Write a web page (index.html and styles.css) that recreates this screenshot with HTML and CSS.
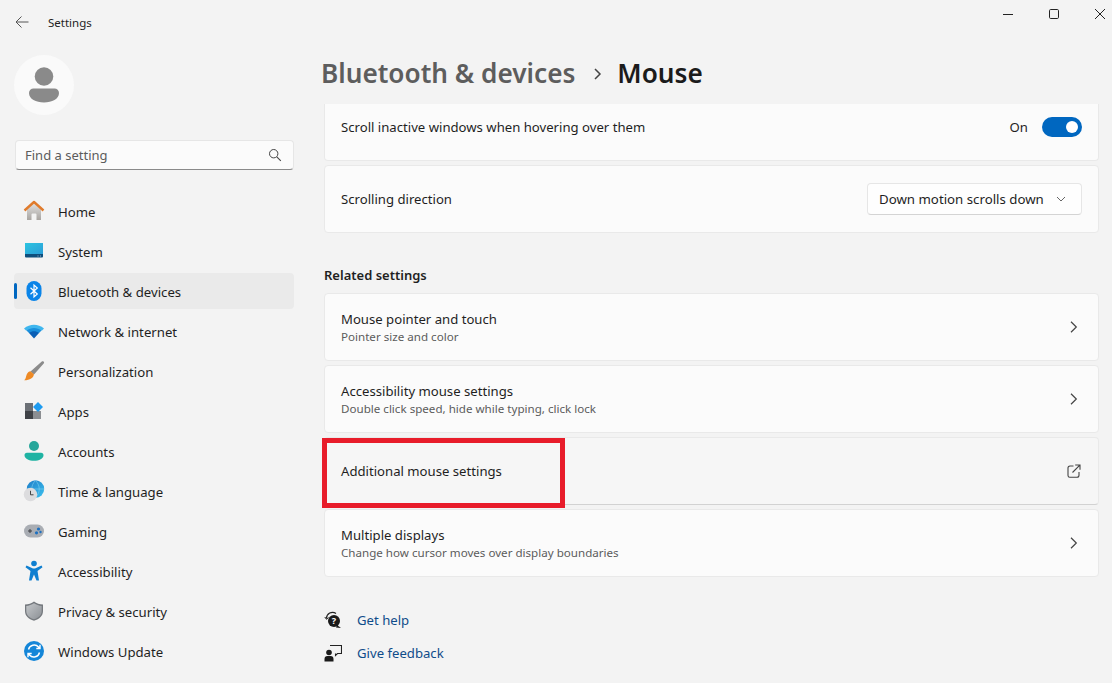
FILE: index.html
```html
<!DOCTYPE html>
<html lang="en">
<head>
<meta charset="utf-8">
<title>Settings</title>
<link rel="stylesheet" href="styles.css">
</head>
<body>
<div class="window">
  <header class="titlebar">
    <div class="title-left">
      <svg class="back" width="16" height="16" viewBox="0 0 16 16"><path d="M14.5 8H2M7.5 2.5 2 8l5.500 5.500" fill="none" stroke="#555" stroke-width="1"/></svg>
      <span class="app-name">Settings</span>
    </div>
    <div class="win-controls">
      <svg width="12" height="12" viewBox="0 0 12 12"><path d="M1 6.500h10" stroke="#222" stroke-width="1"/></svg>
      <svg width="12" height="12" viewBox="0 0 12 12"><rect x="1.500" y="1.500" width="9" height="9" rx="1.200" fill="none" stroke="#222" stroke-width="1"/></svg>
      <svg width="12" height="12" viewBox="0 0 12 12"><path d="M1 1l10 10M11 1 1 11" stroke="#222" stroke-width="1"/></svg>
    </div>
  </header>
  <div class="body">
    <aside class="sidebar">
      <div class="avatar">
        <svg width="30" height="36" viewBox="0 0 30 36"><circle cx="15" cy="9.500" r="9.300" fill="#8a8a8a"/><path d="M4.500 21.500h21a4.500 4.500 0 0 1 4.500 4.500c0 6-7 9.500-15 9.500S0 32 0 26a4.500 4.500 0 0 1 4.500-4.500z" fill="#8a8a8a"/></svg>
      </div>
      <div class="search">
        <span>Find a setting</span>
        <svg width="14" height="14" viewBox="0 0 14 14"><circle cx="5.700" cy="5.700" r="4.200" fill="none" stroke="#444" stroke-width="1"/><path d="M8.800 8.800l4 4" stroke="#444" stroke-width="1.100"/></svg>
      </div>
      <nav class="nav">
        <a class="nav-item">
          <svg class="nav-icon" viewBox="0 0 22 22"><defs><linearGradient id="h1" x1="0" y1="0" x2="0" y2="1"><stop offset="0" stop-color="#e0e0e0"/><stop offset="1" stop-color="#a8a4a0"/></linearGradient></defs><path d="M4 9.500 11 3.500l7 6V20H13.500v-5.500a1 1 0 0 0-1-1h-3a1 1 0 0 0-1 1V20H4z" fill="url(#h1)"/><path d="M1.500 10.500 11 2l9.500 8.500" fill="none" stroke="#e07b2c" stroke-width="2.400" stroke-linejoin="round"/></svg>
          <span>Home</span>
        </a>
        <a class="nav-item">
          <svg class="nav-icon" viewBox="0 0 22 22"><defs><linearGradient id="s1" x1="0" y1="0" x2="1" y2="1"><stop offset="0" stop-color="#2cc4e0"/><stop offset="1" stop-color="#2b9ed8"/></linearGradient></defs><rect x="2" y="3" width="18" height="11" fill="url(#s1)"/><path d="M2 14h18v2.500a1 1 0 0 1-1 1H3a1 1 0 0 1-1-1z" fill="#0e4f7d"/><path d="M14.500 16h1M17 16h1" stroke="#bcd" stroke-width=".8"/></svg>
          <span>System</span>
        </a>
        <a class="nav-item active">
          <svg class="nav-icon" viewBox="0 0 22 22"><rect x="3.500" y="1" width="15" height="20" rx="7.500" fill="#0a84e8"/><path d="M7.500 7.700 14.300 14 11 17V5l3.300 3L7.500 14.300" fill="none" stroke="#fff" stroke-width="1.200"/></svg>
          <span>Bluetooth &amp; devices</span>
        </a>
        <a class="nav-item">
          <svg class="nav-icon" viewBox="0 0 22 22"><path d="M1 8.500C7 3.500 15 3.500 21 8.500L19 10.500H3z" fill="#3fb6ee"/><path d="M3.500 10.500c4.500-3.500 10.500-3.500 15 0L16 13H6z" fill="#1a8fdc"/><path d="M6 13c3-2.300 7-2.300 10 0l-5 5.500z" fill="#0a5fb5"/></svg>
          <span>Network &amp; internet</span>
        </a>
        <a class="nav-item">
          <svg class="nav-icon" viewBox="0 0 22 22"><path d="M20.500 1.500c.8.600.8 1.300.2 2L11 14.500l-3.500-3L18.800 1.500c.5-.5 1.200-.5 1.700 0z" fill="#8b8b8b"/><path d="M7.500 11.200l3.400 3c-.3 3.500-3.900 6-9.700 6 2-1.700 1.500-3.500 2.600-6 1-1.900 2.200-3 3.700-3z" fill="#ee8a25"/></svg>
          <span>Personalization</span>
        </a>
        <a class="nav-item">
          <svg class="nav-icon" viewBox="0 0 22 22"><rect x="2" y="3" width="8" height="8" fill="#6b6f75"/><rect x="2" y="11" width="8" height="8" fill="#3f4247"/><rect x="10" y="11" width="8" height="8" fill="#8b8e92"/><path d="M15 2 20 7 15 12 10 7z" fill="#1e9bf0"/></svg>
          <span>Apps</span>
        </a>
        <a class="nav-item">
          <svg class="nav-icon" viewBox="0 0 22 22"><circle cx="11" cy="6" r="5" fill="#27a79b"/><path d="M4 12.800h14a2.500 2.500 0 0 1 2.500 2.500c0 3.500-4.500 5.500-9.500 5.500s-9.500-2-9.500-5.500A2.500 2.500 0 0 1 4 12.800z" fill="#1fb3a3"/></svg>
          <span>Accounts</span>
        </a>
        <a class="nav-item">
          <svg class="nav-icon" viewBox="0 0 22 22"><defs><linearGradient id="t1" x1="0" y1="0" x2="1" y2="1"><stop offset="0" stop-color="#1e7dc8"/><stop offset="1" stop-color="#3cc0ee"/></linearGradient></defs><circle cx="12.500" cy="9" r="8.700" fill="url(#t1)"/><path d="M4 9h17M12.500 .5c-5 5-5 12 0 17M12.500 .5c5 5 5 12 0 17" fill="none" stroke="#7fd0f0" stroke-width=".6"/><circle cx="7.500" cy="14.500" r="6.700" fill="#dcdcde"/><path d="M7.500 10.800v4h3" fill="none" stroke="#444" stroke-width="1"/></svg>
          <span>Time &amp; language</span>
        </a>
        <a class="nav-item">
          <svg class="nav-icon" viewBox="0 0 22 22"><rect x="1" y="4.500" width="20" height="13" rx="6.500" fill="#a9adb3"/><path d="M5 11h4M7 9v4" stroke="#3c3f44" stroke-width="1"/><circle cx="15.500" cy="9" r="1.600" fill="#1e70c0"/><circle cx="13.500" cy="12.800" r="1.600" fill="#1e70c0"/><circle cx="17.500" cy="12" r="1.200" fill="#1e70c0"/></svg>
          <span>Gaming</span>
        </a>
        <a class="nav-item">
          <svg class="nav-icon" viewBox="0 0 22 22"><circle cx="11" cy="3.500" r="2.800" fill="#0f7fd0"/><path d="M3.500 5.500 10 8.500h2L18.500 5.500l1 1.800L14.500 11 16 20.500h-2.500L11 14.500l-2.500 6H6L7.500 11 2.500 7.300z" fill="#0f7fd0"/></svg>
          <span>Accessibility</span>
        </a>
        <a class="nav-item">
          <svg class="nav-icon" viewBox="0 0 22 22"><defs><linearGradient id="p1" x1="0" y1="0" x2="1" y2="1"><stop offset="0" stop-color="#c4c7ca"/><stop offset="1" stop-color="#8c9095"/></linearGradient></defs><path d="M11 1.500c2.500 2 5.500 2.700 9 3v6.500c0 5-3.500 8-9 9.800-5.500-1.800-9-4.800-9-9.800V4.500c3.500-.3 6.500-1 9-3z" fill="#75797e"/><path d="M11 3.200c2.300 1.700 5 2.400 7.700 2.700V11c0 4.200-3 6.800-7.700 8.300C6.300 17.800 3.300 15.200 3.300 11V5.900C6 5.600 8.700 4.900 11 3.200z" fill="url(#p1)"/></svg>
          <span>Privacy &amp; security</span>
        </a>
        <a class="nav-item">
          <svg class="nav-icon" viewBox="0 0 22 22"><circle cx="11" cy="11" r="10" fill="#1486d8"/><path d="M5.500 9.500A5.800 5.800 0 0 1 15.500 7l1 1M17 4.800V8.500h-3.700M16.500 12.500A5.800 5.800 0 0 1 6.500 15l-1-1M5 17.200V13.500h3.700" fill="none" stroke="#fff" stroke-width="1.400"/></svg>
          <span>Windows Update</span>
        </a>
      </nav>
    </aside>
    <main class="main">
      <h1 class="crumbs">
        <span class="crumb-parent">Bluetooth &amp; devices</span>
        <svg class="crumb-sep" width="10" height="14" viewBox="0 0 10 14"><path d="M2 2l5 5-5 5" fill="none" stroke="#444" stroke-width="1.500"/></svg>
        <span>Mouse</span>
      </h1>
      <div class="content">
        <div class="card clipped">
          <span class="label">Scroll inactive windows when hovering over them</span>
          <div class="toggle-wrap">
            <span class="label">On</span>
            <span class="toggle"><span class="knob"></span></span>
          </div>
        </div>
        <div class="card tall">
          <span class="label">Scrolling direction</span>
          <div class="select">
            <span>Down motion scrolls down</span>
            <svg width="10" height="6" viewBox="0 0 10 6"><path d="M1 1l4 4 4-4" fill="none" stroke="#666" stroke-width="1"/></svg>
          </div>
        </div>
        <h2 class="section">Related settings</h2>
        <div class="card tall">
          <div class="text"><span class="label">Mouse pointer and touch</span><span class="sub">Pointer size and color</span></div>
          <svg class="chev" width="8" height="12" viewBox="0 0 8 12"><path d="M1 .8 6.300 6 1 11.200" fill="none" stroke="#444" stroke-width="1.200"/></svg>
        </div>
        <div class="card tall">
          <div class="text"><span class="label">Accessibility mouse settings</span><span class="sub">Double click speed, hide while typing, click lock</span></div>
          <svg class="chev" width="8" height="12" viewBox="0 0 8 12"><path d="M1 .8 6.300 6 1 11.200" fill="none" stroke="#444" stroke-width="1.200"/></svg>
        </div>
        <div class="card tall hover">
          <span class="label">Additional mouse settings</span>
          <svg class="ext" width="14" height="14" viewBox="0 0 14 14"><path d="M6.500 2H3a2 2 0 0 0-2 2v7.500a1.800 1.800 0 0 0 1.800 1.800H10a2 2 0 0 0 2-2V8" fill="none" stroke="#444" stroke-width="1.100"/><path d="M5.500 8.500 12.800 1.200M8.200 1h4.800v4.800" fill="none" stroke="#444" stroke-width="1.100"/></svg>
          <span class="highlight"></span>
        </div>
        <div class="card tall">
          <div class="text"><span class="label">Multiple displays</span><span class="sub">Change how cursor moves over display boundaries</span></div>
          <svg class="chev" width="8" height="12" viewBox="0 0 8 12"><path d="M1 .8 6.300 6 1 11.200" fill="none" stroke="#444" stroke-width="1.200"/></svg>
        </div>
        <div class="links">
          <a class="link">
            <svg width="18" height="18" viewBox="0 0 18 18"><path d="M2.500 7.500A6 6 0 0 1 12 2.500" fill="none" stroke="#222" stroke-width="1.200"/><path d="M.8 6l1.700 2.300L4.500 6.500" fill="none" stroke="#222" stroke-width="1"/><circle cx="10" cy="10" r="6" fill="#1a1a1a"/><path d="M13 14l4 3-5-.5z" fill="#1a1a1a"/><text x="10" y="13" class="q">?</text></svg>
            <span>Get help</span>
          </a>
          <a class="link">
            <svg width="18" height="18" viewBox="0 0 18 18"><circle cx="5" cy="8.500" r="2.800" fill="#1a1a1a"/><path d="M.5 17.500v-2.500a3 3 0 0 1 3-3h3a3 3 0 0 1 3 3v2.500z" fill="#1a1a1a"/><path d="M6 1.500h11.500v8h-4L11.500 11.500V9.500" fill="none" stroke="#222" stroke-width="1.100"/></svg>
            <span>Give feedback</span>
          </a>
        </div>
      </div>
    </main>
  </div>
</div>
</body>
</html>
```
FILE: styles.css
```css
* { box-sizing: border-box; }
html, body { margin: 0; height: 100%; }
body {
  background: #f3f3f3;
  color: #1f1f1f;
  font-family: "Noto Sans", "Open Sans", "Liberation Sans", sans-serif;
  font-size: 13px;
  overflow: hidden;
}
.window { width: 1112px; height: 683px; display: flex; flex-direction: column; overflow: hidden; }
.titlebar { height: 46px; display: flex; justify-content: space-between; flex-shrink: 0; }
.title-left { display: flex; align-items: center; height: 44px; padding-left: 14px; }
.back { margin-right: 18px; }
.app-name { font-size: 11.500px; color: #222; }
.win-controls { display: flex; align-items: flex-start; gap: 34px; padding: 8px 6px 0 0; }
.body { flex: 1; display: flex; min-height: 0; }
.sidebar { width: 308px; flex-shrink: 0; padding: 9px 14px 0; }
.avatar { width: 60px; height: 60px; border-radius: 50%; background: #fafafa; display: flex; align-items: center; justify-content: center; }
.search {
  margin: 25px 0 0 1px; width: 279px; height: 30px;
  background: #fbfbfb; border: 1px solid #e6e6e6; border-bottom: 1px solid #8a8a8a; border-radius: 4px;
  display: flex; align-items: center; justify-content: space-between; padding: 0 11px 0 9px;
  font-size: 13px; color: #5c5c5c;
}
.nav { margin-top: 23px; display: flex; flex-direction: column; gap: 4px; }
.nav-item { height: 36px; width: 280px; display: flex; align-items: center; gap: 13px; padding-left: 9px; border-radius: 4px; font-size: 13.200px; color: #1f1f1f; position: relative; }
.nav-item span { margin-top: 2px; }
.nav-icon { width: 22px; height: 22px; flex-shrink: 0; }
.nav-item.active { background: #eaeaea; }
.nav-item.active::before { content: ""; position: absolute; left: 0; top: 10px; width: 3px; height: 16px; border-radius: 2px; background: #0067c0; }
.main { flex: 1; display: flex; flex-direction: column; min-width: 0; padding-right: 13px; }
.crumbs { margin: 0 0 0 13px; height: 58px; display: flex; align-items: flex-start; gap: 14px; font-size: 26.200px; font-weight: 600; line-height: 55px; color: #1b1b1b; }
.crumb-parent { color: #5d5d5d; }
.crumb-sep { margin: 21px 0 0 4px; }
.content { padding-left: 16px; display: flex; flex-direction: column; gap: 4px; }
.card {
  background: #fbfbfb; border: 1px solid #e9e9e9; border-radius: 4px;
  padding: 0 16px; display: flex; align-items: center; justify-content: space-between; position: relative;
}
.clipped { height: 57px; border-top: none; border-radius: 0 0 4px 4px; padding-bottom: 11px; padding-top: 0; }
.tall { height: 68px; }
.hover { background: #f6f6f6; border-bottom-color: #d2d2d2; }
.label { font-size: 13.150px; color: #1f1f1f; }
.sub { font-size: 11.600px; color: #5c5c5c; line-height: 15px; margin-top: 1px; }
.text { display: flex; flex-direction: column; margin-top: -1px; }
.toggle-wrap { display: flex; align-items: center; gap: 14px; }
.toggle { width: 40px; height: 20px; border-radius: 10px; background: #0067c0; display: flex; align-items: center; justify-content: flex-end; padding-right: 4px; }
.knob { width: 12px; height: 12px; border-radius: 50%; background: #fff; }
.select {
  width: 215px; height: 32px; background: #fefefe; border: 1px solid #e6e6e6; border-bottom-color: #d4d4d4; border-radius: 4px;
  display: flex; align-items: center; justify-content: space-between; padding: 0 15px 0 11px; font-size: 13.250px; color: #1f1f1f;
}
.section { margin: 29px 0 5px; font-size: 13px; font-weight: 600; line-height: 18px; color: #1f1f1f; }
.chev { margin-right: 4px; }
.ext { margin-right: 1px; }
.highlight { position: absolute; left: -3px; top: 0; width: 243px; height: 70px; border: 5px solid #e81c2a; pointer-events: none; }
.links { margin-top: 28px; display: flex; flex-direction: column; gap: 11px; }
.link { display: flex; align-items: center; gap: 15px; height: 22px; color: #0f4c8a; font-size: 13.150px; }
.q { font: 700 9px "Noto Sans", sans-serif; fill: #fff; text-anchor: middle; }
```
